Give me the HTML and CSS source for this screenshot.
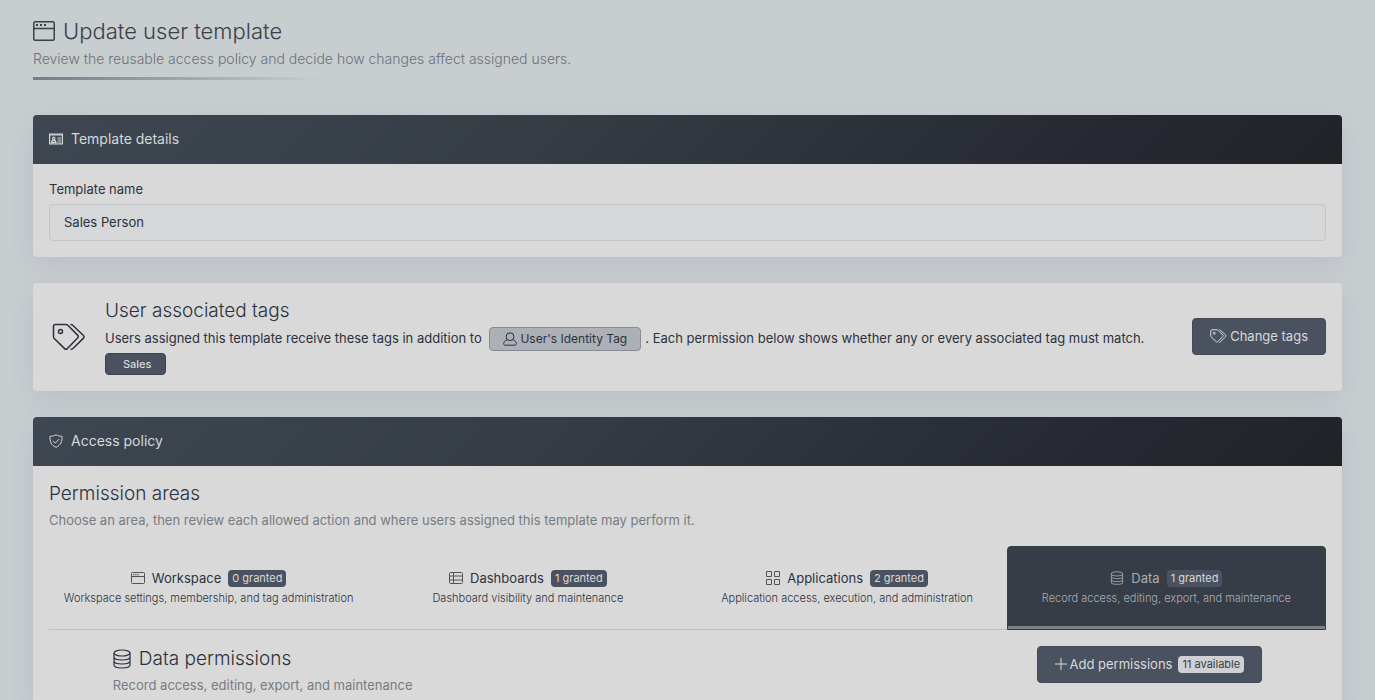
FILE: index.html
```html
<!DOCTYPE html>
<html lang="en">
<head>
  <meta charset="UTF-8">
  <meta name="viewport" content="width=device-width, initial-scale=1.0">
  <title>Update user template</title>
  <link rel="stylesheet" href="styles.css">
</head>
<body>
  <svg class="sprite" aria-hidden="true">
    <symbol id="icon-window" viewBox="0 0 22 20">
      <rect x="0.75" y="0.75" width="20.5" height="18.5" rx="1.5"/>
      <path d="M1 7.5h20"/>
      <path class="solid" d="M3 3h2v2H3zM7 3h2v2H7zM11 3h2v2h-2z"/>
    </symbol>
    <symbol id="icon-window-small" viewBox="0 0 14 14">
      <rect x="0.5" y="1.5" width="13" height="11" rx="1"/>
      <path d="M.5 5.500h13"/>
      <path class="solid" d="M2 3h1.200v1.200H2zM4.200 3h1.200v1.200H4.200zM6.400 3h1.200v1.200H6.400z"/>
    </symbol>
    <symbol id="icon-tags" viewBox="0 0 34 28">
      <path d="M1.5 3.2Q1.5 1.5 3.2 1.5H14q1 0 1.8.8l9.8 9.8q1.4 1.4 0 2.8L15.400 25.600q-1.400 1.400-2.800 0L2.300 15.500q-.8-.8-.8-1.800z"/>
      <path d="M18.500 1.500q1.500 0 2.500 1l10.500 10q1.300 1.300 0 2.600L21.500 25q-1.500 1.500-3 1.500"/>
      <circle cx="8.500" cy="8.500" r="2"/>
    </symbol>
    <symbol id="icon-table" viewBox="0 0 14 14">
      <rect x="0.5" y="1.500" width="13" height="11" rx="1"/>
      <path d="M.5 5h13M.5 9h13M4.500 1.500v11"/>
    </symbol>
    <symbol id="icon-grid" viewBox="0 0 14 14">
      <path d="M.5.500h5v5h-5zM8.500.500h5v5h-5zM.5 8.500h5v5h-5zM8.500 8.500h5v5h-5z"/>
    </symbol>
    <symbol id="icon-database" viewBox="0 0 18 20">
      <ellipse cx="9" cy="4" rx="8" ry="3"/>
      <path d="M1 4v12c0 1.700 3.600 3 8 3s8-1.300 8-3V4M1 8c0 1.700 3.600 3 8 3s8-1.300 8-3M1 12c0 1.700 3.600 3 8 3s8-1.300 8-3"/>
    </symbol>
    <symbol id="icon-shield" viewBox="0 0 14 14">
      <path d="M7 .7C5.300 1.900 3.300 2.200 1 2.300c-.3 5.200 1.200 9 6 11 4.800-2 6.300-5.800 6-11C10.700 2.200 8.700 1.900 7 .7zM4 6.800l2.300 2.300L10.300 5"/>
    </symbol>
    <symbol id="icon-card" viewBox="0 0 14 12">
      <rect x="0.6" y="1.100" width="12.800" height="9.800"/>
      <path d="M.6 2h12.800M8.500 5h3.500M8.500 7h3.500M8.500 9h3.500M2.500 9.300c0-3 4.500-3 4.500 0z"/>
      <circle cx="4.700" cy="5.400" r="1.200"/>
    </symbol>
    <symbol id="icon-user" viewBox="0 0 14 14">
      <circle cx="7" cy="4.700" r="3.900"/>
      <path d="M4.300 7.700C2 8.200.7 10 .7 11.700c0 .9.500 1.500 1.400 1.500h9.800c.9 0 1.400-.6 1.400-1.500 0-1.700-1.300-3.500-3.600-4"/>
    </symbol>
    <symbol id="icon-plus" viewBox="0 0 12 12">
      <path d="M6 0v12M0 6h12"/>
    </symbol>
  </svg>

  <main class="page">
    <header class="page-header">
      <h1><svg class="icon icon-title"><use href="#icon-window"/></svg>Update user template</h1>
      <p>Review the reusable access policy and decide how changes affect assigned users.</p>
      <div class="title-line"></div>
    </header>

    <section class="card">
      <h2 class="card-header"><svg class="icon icon-small icon-card"><use href="#icon-card"/></svg>Template details</h2>
      <div class="card-body">
        <label for="template-name">Template name</label>
        <input type="text" id="template-name" value="Sales Person">
      </div>
    </section>

    <section class="card tags">
      <svg class="icon icon-tags"><use href="#icon-tags"/></svg>
      <div class="tags-text">
        <h3>User associated tags</h3>
        <p>Users assigned this template receive these tags in addition to <span class="identity-tag"><svg class="icon icon-small"><use href="#icon-user"/></svg>User's Identity Tag</span>. Each permission below shows whether any or every associated tag must match.</p>
        <span class="tag">Sales</span>
      </div>
      <button type="button" class="button"><svg class="icon icon-button"><use href="#icon-tags"/></svg>Change tags</button>
    </section>

    <section class="card">
      <h2 class="card-header"><svg class="icon icon-small"><use href="#icon-shield"/></svg>Access policy</h2>
      <div class="card-body">
        <h3>Permission areas</h3>
        <p class="muted">Choose an area, then review each allowed action and where users assigned this template may perform it.</p>

        <div class="tabs" role="tablist">
          <button type="button" class="tab" role="tab" aria-selected="false">
            <span class="tab-title"><svg class="icon icon-small"><use href="#icon-window-small"/></svg>Workspace <span class="badge">0 granted</span></span>
            <span class="tab-info">Workspace settings, membership, and tag administration</span>
          </button>
          <button type="button" class="tab" role="tab" aria-selected="false">
            <span class="tab-title"><svg class="icon icon-small"><use href="#icon-table"/></svg>Dashboards <span class="badge">1 granted</span></span>
            <span class="tab-info">Dashboard visibility and maintenance</span>
          </button>
          <button type="button" class="tab" role="tab" aria-selected="false">
            <span class="tab-title"><svg class="icon icon-small"><use href="#icon-grid"/></svg>Applications <span class="badge">2 granted</span></span>
            <span class="tab-info">Application access, execution, and administration</span>
          </button>
          <button type="button" class="tab active" role="tab" aria-selected="true">
            <span class="tab-title"><svg class="icon icon-small icon-data"><use href="#icon-database"/></svg>Data <span class="badge">1 granted</span></span>
            <span class="tab-info">Record access, editing, export, and maintenance</span>
          </button>
        </div>

        <div class="panel" role="tabpanel">
          <div>
            <h3><svg class="icon icon-panel"><use href="#icon-database"/></svg>Data permissions</h3>
            <p class="muted">Record access, editing, export, and maintenance</p>
          </div>
          <button type="button" class="button"><svg class="icon icon-plus"><use href="#icon-plus"/></svg>Add permissions <span class="badge light">11 available</span></button>
        </div>
      </div>
    </section>
  </main>
</body>
</html>
```
FILE: styles.css
```css
* {
  box-sizing: border-box;
}

body {
  margin: 0;
  background-color: #c8cdd0;
  color: #2c323d;
  font-family: Inter, "Liberation Sans", sans-serif;
  font-size: 13px;
  line-height: 20px;
}

h1,
h2,
h3,
p {
  margin: 0;
  font-weight: 400;
}

.sprite {
  display: none;
}

.icon {
  flex: none;
  fill: none;
  stroke: currentColor;
  stroke-width: 1.5;
}

.solid {
  fill: currentColor;
  stroke: none;
}

.icon-title {
  width: 22px;
  height: 20px;
}

.icon-small {
  width: 14px;
  height: 14px;
  stroke-width: 1;
}

.icon-card {
  stroke-width: 1.2;
}

.icon-data {
  stroke-width: 1.5;
}

.icon-tags {
  width: 34px;
  height: 28px;
}

.icon-button {
  width: 17px;
  height: 14px;
  stroke-width: 2;
}

.icon-panel {
  width: 18px;
  height: 20px;
  stroke-width: 1.2;
}

.icon-plus {
  width: 12px;
  height: 12px;
  stroke-width: 1;
}

.page {
  padding: 16px 33px;
}

.page-header {
  margin-bottom: 35px;
}

.page-header h1 {
  display: flex;
  align-items: center;
  gap: 8px;
  color: #3b4048;
  font-size: 22px;
  font-weight: 300;
  line-height: 30px;
}

.page-header p {
  margin-top: 3px;
  color: #6c7177;
  font-size: 14px;
  font-weight: 300;
  line-height: 20px;
}

.title-line {
  width: 22%;
  height: 3px;
  margin-top: 8px;
  background: linear-gradient(90deg, #757c8b, #c8cdd0);
}

.card {
  margin-bottom: 26px;
  background-color: #d9d9d9;
  border-radius: 4px;
  box-shadow: 0 8px 24px rgba(90, 100, 140, 0.12);
}

.card-header {
  display: flex;
  align-items: center;
  gap: 8px;
  height: 49px;
  padding: 0 16px 2px;
  color: #d5d8db;
  background: linear-gradient(135deg, #3e4751, #353c44 40%, #262932 80%, #202326);
  border-radius: 4px 4px 0 0;
  font-size: 14px;
}

.card-body {
  padding: 15px 16px 16px;
}

.card-body label {
  display: block;
  margin-bottom: 5px;
}

.card-body input {
  display: block;
  width: 100%;
  height: 37px;
  padding: 0 14px 2px;
  color: #2c323d;
  background-color: #d5d7d9;
  border: 1px solid #c2c6ca;
  border-radius: 4px;
  font: inherit;
}

h3 {
  display: flex;
  align-items: center;
  gap: 8px;
  font-size: 19px;
  font-weight: 300;
  line-height: 26px;
}

.tags {
  display: flex;
  align-items: center;
  gap: 19px;
  padding: 15px 16px 16px 19px;
}

.tags-text {
  flex: 1;
}

.tags p {
  margin: 2px 0;
  line-height: 24px;
}

.identity-tag {
  display: inline-flex;
  align-items: center;
  gap: 3px;
  height: 24px;
  margin: 0 4px;
  padding: 0 13px;
  background-color: #adb0b6;
  border: 1px solid #868b94;
  border-radius: 4px;
  font-size: 12px;
  vertical-align: middle;
}

.tag {
  display: inline-block;
  padding: 0 13px 0 17px;
  color: #d9d9d9;
  background-color: #4b525f;
  border: 1px solid #3a414c;
  border-radius: 4px;
  font-size: 11px;
  font-weight: 500;
  line-height: 20px;
}

.button {
  display: flex;
  align-items: center;
  gap: 3px;
  height: 37px;
  padding: 0 17px 1px;
  color: #d9d9d9;
  background-color: #4b525f;
  border: 1px solid #444b57;
  border-radius: 4px;
  font: inherit;
  cursor: pointer;
}

.muted {
  color: #777c83;
}

.card-body .muted {
  margin-top: 3px;
}

.tabs {
  display: grid;
  grid-template-columns: repeat(4, 1fr);
  margin-top: 16px;
  border-bottom: 1px solid #bfc2c5;
}

.tab {
  height: 84px;
  margin-bottom: -1px;
  padding: 0;
  color: inherit;
  background: none;
  border: 1px solid transparent;
  border-radius: 4px 4px 0 0;
  font: inherit;
  cursor: pointer;
}

.tab.active {
  color: #a9adb2;
  background-color: #363d46;
  border-color: #363d46;
  box-shadow: inset 0 -3px 0 #7d8183;
}

.tab-title {
  display: flex;
  align-items: center;
  justify-content: center;
  gap: 7px;
}

.tab-title .icon {
  opacity: 0.8;
}

.tab-info {
  display: block;
  font-size: 11px;
  font-weight: 300;
}

.badge {
  padding: 0 4px;
  color: #d9d9d9;
  background-color: #4b525f;
  border-radius: 4px;
  font-size: 11px;
  line-height: 17px;
}

.badge.light {
  margin-left: 3px;
  color: #363d46;
  background-color: #ced0d4;
}

.panel {
  display: flex;
  justify-content: space-between;
  align-items: flex-start;
  width: 90%;
  margin: 16px auto 0;
}
```
